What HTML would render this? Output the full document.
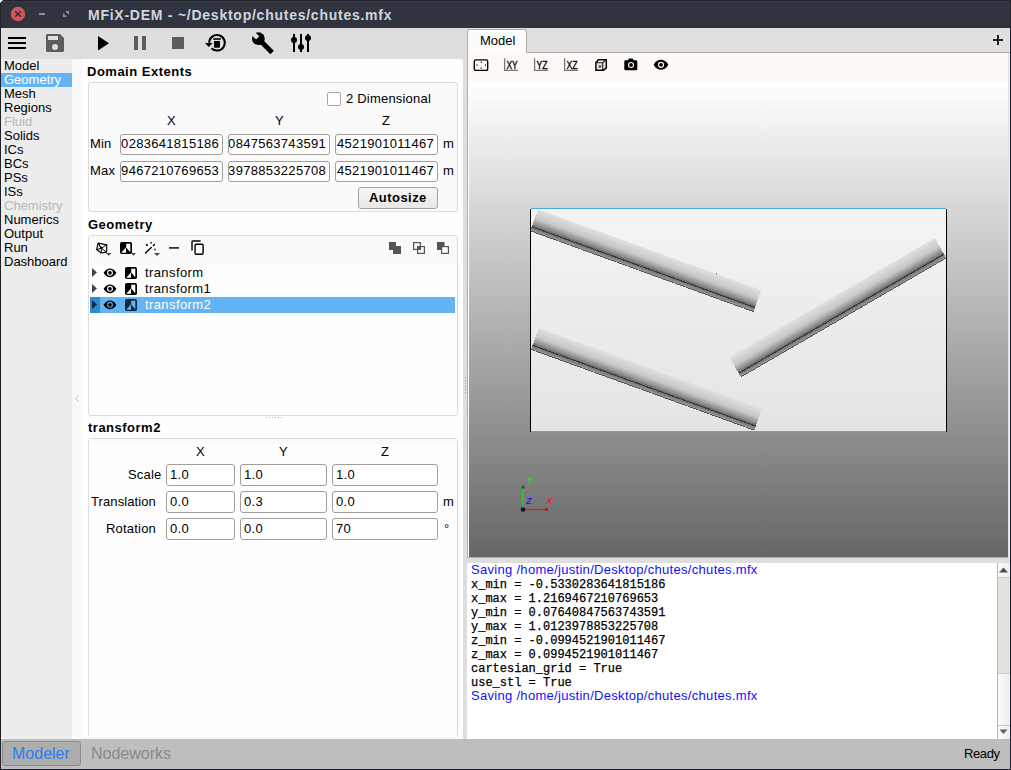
<!DOCTYPE html><html><head><meta charset="utf-8"><style>*{margin:0;padding:0;box-sizing:border-box}html,body{width:1011px;height:770px;overflow:hidden;background:#dedede;font-family:"Liberation Sans",sans-serif}.a{position:absolute}.t{position:absolute;white-space:nowrap;line-height:1}svg{overflow:visible}</style></head><body><div class="a" style="left:0px;top:0px;width:1011px;height:770px;background:#1f2229"></div>
<div class="a" style="left:1px;top:1px;width:1009px;height:27px;background:#2f343f;border-top-left-radius:2px;border-top-right-radius:2px"></div>
<div class="a" style="left:2px;top:1px;width:1007px;height:1px;background:#383d4a"></div>
<svg class="a" style="left:0;top:0" width="4" height="4"><path d="M0 0 H3 L0 3 Z" fill="#fff"/></svg>
<div class="a" style="left:1px;top:28px;width:1009px;height:741px;background:#dedede"></div>
<svg class="a" style="left:0;top:0" width="80" height="28"><circle cx="18" cy="14" r="7.2" fill="#d6555c"/><path d="M15.2 11.2 L20.8 16.8 M20.8 11.2 L15.2 16.8" stroke="#2f343f" stroke-width="1.6"/><rect x="39" y="13" width="6" height="2" fill="#8d919a"/><path d="M65 11 h4 v4 z M63 13 v4 h4 z" fill="#8d919a"/></svg>
<span class="t" style="left:88px;top:8px;font-size:14px;font-weight:bold;color:#cfd5de;font-family:'Liberation Sans',sans-serif;letter-spacing:0.75px;">MFiX-DEM - ~/Desktop/chutes/chutes.mfx</span>
<svg class="a" style="left:0;top:0" width="330" height="60"><rect x="8" y="37" width="18" height="2" fill="#000"/><rect x="8" y="42" width="18" height="2" fill="#000"/><rect x="8" y="47" width="18" height="2" fill="#000"/><path d="M47 34 h13 l4 4 v12.5 a1.5 1.5 0 0 1 -1.5 1.5 h-15 a1.5 1.5 0 0 1 -1.5 -1.5 v-15 a1.5 1.5 0 0 1 1.5 -1.5 z" fill="#5e5c5a"/><rect x="48" y="36" width="10" height="4" fill="#dedede"/><circle cx="55" cy="47" r="3" fill="#dedede"/><path d="M98 36 L109 43.2 L98 50.4 Z" fill="#000"/><rect x="134" y="36" width="4" height="14" fill="#5e5c5a"/><rect x="142" y="36" width="4" height="14" fill="#5e5c5a"/><rect x="172" y="37" width="12" height="12" fill="#5e5c5a"/><path d="M209.2 42.8 A7.8 7.8 0 1 1 211.5 48.3" stroke="#000" stroke-width="2" fill="none"/><path d="M205 43 L212.6 43 L208.8 46.9 Z" fill="#000"/><rect x="213.2" y="38.2" width="7.6" height="1.6" fill="#000"/><path d="M214 41 h6 v6 a0.8 0.8 0 0 1 -0.8 0.8 h-4.4 a0.8 0.8 0 0 1 -0.8 -0.8z" fill="#000"/><g transform="rotate(45 258.4 38.7)"><circle cx="258.4" cy="38.7" r="6.4" fill="#000"/><rect x="258.4" y="36.2" width="19.4" height="5" fill="#000"/><rect x="250" y="36.4" width="7.4" height="4.6" fill="#dedede"/></g><rect x="293" y="34" width="2" height="18" fill="#000"/><rect x="300" y="34" width="2" height="18" fill="#000"/><rect x="307" y="34" width="2" height="18" fill="#000"/><circle cx="294" cy="40" r="3" fill="#000"/><circle cx="301" cy="47" r="3" fill="#000"/><circle cx="308" cy="38" r="3" fill="#000"/></svg>
<div class="a" style="left:1px;top:59px;width:71px;height:680px;background:#ededed"></div>
<div class="a" style="left:1px;top:73px;width:71px;height:14px;background:#64b4f3"></div>
<span class="t" style="left:4px;top:59px;font-size:13px;font-weight:normal;color:#000;font-family:'Liberation Sans',sans-serif;letter-spacing:0px;">Model</span>
<span class="t" style="left:4px;top:73px;font-size:13px;font-weight:normal;color:#fff;font-family:'Liberation Sans',sans-serif;letter-spacing:0px;">Geometry</span>
<span class="t" style="left:4px;top:87px;font-size:13px;font-weight:normal;color:#000;font-family:'Liberation Sans',sans-serif;letter-spacing:0px;">Mesh</span>
<span class="t" style="left:4px;top:101px;font-size:13px;font-weight:normal;color:#000;font-family:'Liberation Sans',sans-serif;letter-spacing:0px;">Regions</span>
<span class="t" style="left:4px;top:115px;font-size:13px;font-weight:normal;color:#b9b9b9;font-family:'Liberation Sans',sans-serif;letter-spacing:0px;">Fluid</span>
<span class="t" style="left:4px;top:129px;font-size:13px;font-weight:normal;color:#000;font-family:'Liberation Sans',sans-serif;letter-spacing:0px;">Solids</span>
<span class="t" style="left:4px;top:143px;font-size:13px;font-weight:normal;color:#000;font-family:'Liberation Sans',sans-serif;letter-spacing:0px;">ICs</span>
<span class="t" style="left:4px;top:157px;font-size:13px;font-weight:normal;color:#000;font-family:'Liberation Sans',sans-serif;letter-spacing:0px;">BCs</span>
<span class="t" style="left:4px;top:171px;font-size:13px;font-weight:normal;color:#000;font-family:'Liberation Sans',sans-serif;letter-spacing:0px;">PSs</span>
<span class="t" style="left:4px;top:185px;font-size:13px;font-weight:normal;color:#000;font-family:'Liberation Sans',sans-serif;letter-spacing:0px;">ISs</span>
<span class="t" style="left:4px;top:199px;font-size:13px;font-weight:normal;color:#b9b9b9;font-family:'Liberation Sans',sans-serif;letter-spacing:0px;">Chemistry</span>
<span class="t" style="left:4px;top:213px;font-size:13px;font-weight:normal;color:#000;font-family:'Liberation Sans',sans-serif;letter-spacing:0px;">Numerics</span>
<span class="t" style="left:4px;top:227px;font-size:13px;font-weight:normal;color:#000;font-family:'Liberation Sans',sans-serif;letter-spacing:0px;">Output</span>
<span class="t" style="left:4px;top:241px;font-size:13px;font-weight:normal;color:#000;font-family:'Liberation Sans',sans-serif;letter-spacing:0px;">Run</span>
<span class="t" style="left:4px;top:255px;font-size:13px;font-weight:normal;color:#000;font-family:'Liberation Sans',sans-serif;letter-spacing:0px;">Dashboard</span>
<div class="a" style="left:72px;top:59px;width:10px;height:680px;background:#f9f9f9"></div>
<div class="a" style="left:82px;top:59px;width:381px;height:680px;background:#fefefe"></div>
<svg class="a" style="left:74px;top:394px" width="6" height="10"><path d="M4.5 1.5 L1.5 4.5 L4.5 7.5" stroke="#b8b8b8" stroke-width="1" fill="none"/></svg>
<span class="t" style="left:87px;top:65px;font-size:13px;font-weight:bold;color:#000;font-family:'Liberation Sans',sans-serif;letter-spacing:0.5px;">Domain Extents</span>
<div class="a" style="left:88px;top:82px;width:370px;height:130px;border:1px solid #dcdcdc;border-radius:3px;background:#fafafa"></div>
<div class="a" style="left:327px;top:92px;width:14px;height:14px;border:1px solid #a9a6a3;border-radius:2px;background:#fff"></div>
<span class="t" style="left:346px;top:92px;font-size:13px;font-weight:normal;color:#000;font-family:'Liberation Sans',sans-serif;letter-spacing:0.2px;">2 Dimensional</span>
<span class="t" style="left:167px;top:114px;font-size:13px;font-weight:normal;color:#000;font-family:'Liberation Sans',sans-serif;letter-spacing:0px;">X</span>
<span class="t" style="left:275px;top:114px;font-size:13px;font-weight:normal;color:#000;font-family:'Liberation Sans',sans-serif;letter-spacing:0px;">Y</span>
<span class="t" style="left:382px;top:114px;font-size:13px;font-weight:normal;color:#000;font-family:'Liberation Sans',sans-serif;letter-spacing:0px;">Z</span>
<span class="t" style="left:90px;top:137px;font-size:13px;font-weight:normal;color:#000;font-family:'Liberation Sans',sans-serif;letter-spacing:0.2px;">Min</span>
<span class="t" style="left:90px;top:164px;font-size:13px;font-weight:normal;color:#000;font-family:'Liberation Sans',sans-serif;letter-spacing:0.2px;">Max</span>
<span class="t" style="left:443px;top:137px;font-size:13px;font-weight:normal;color:#000;font-family:'Liberation Sans',sans-serif;letter-spacing:0px;">m</span>
<span class="t" style="left:443px;top:164px;font-size:13px;font-weight:normal;color:#000;font-family:'Liberation Sans',sans-serif;letter-spacing:0px;">m</span>
<div class="a" style="left:120px;top:134px;width:103px;height:21px;border:1px solid #a19e9b;border-radius:3px;background:#fff;overflow:hidden"><span style="position:absolute;top:2px;right:3px;font-size:13px;line-height:1;letter-spacing:0.3px;white-space:nowrap">0283641815186</span></div>
<div class="a" style="left:228px;top:134px;width:102px;height:21px;border:1px solid #a19e9b;border-radius:3px;background:#fff;overflow:hidden"><span style="position:absolute;top:2px;right:3px;font-size:13px;line-height:1;letter-spacing:0.3px;white-space:nowrap">0847563743591</span></div>
<div class="a" style="left:335px;top:134px;width:103px;height:21px;border:1px solid #a19e9b;border-radius:3px;background:#fff;overflow:hidden"><span style="position:absolute;top:2px;right:3px;font-size:13px;line-height:1;letter-spacing:0.3px;white-space:nowrap">4521901011467</span></div>
<div class="a" style="left:120px;top:161px;width:103px;height:21px;border:1px solid #a19e9b;border-radius:3px;background:#fff;overflow:hidden"><span style="position:absolute;top:2px;right:3px;font-size:13px;line-height:1;letter-spacing:0.3px;white-space:nowrap">9467210769653</span></div>
<div class="a" style="left:228px;top:161px;width:102px;height:21px;border:1px solid #a19e9b;border-radius:3px;background:#fff;overflow:hidden"><span style="position:absolute;top:2px;right:3px;font-size:13px;line-height:1;letter-spacing:0.3px;white-space:nowrap">3978853225708</span></div>
<div class="a" style="left:335px;top:161px;width:103px;height:21px;border:1px solid #a19e9b;border-radius:3px;background:#fff;overflow:hidden"><span style="position:absolute;top:2px;right:3px;font-size:13px;line-height:1;letter-spacing:0.3px;white-space:nowrap">4521901011467</span></div>
<div class="a" style="left:358px;top:187px;width:80px;height:22px;border:1px solid #a5a29f;border-radius:3px;background:linear-gradient(#f7f6f5,#e9e7e5)"></div>
<span class="t" style="left:369px;top:191px;font-size:13px;font-weight:bold;color:#000;font-family:'Liberation Sans',sans-serif;letter-spacing:0.45px;">Autosize</span>
<span class="t" style="left:88px;top:218px;font-size:13px;font-weight:bold;color:#000;font-family:'Liberation Sans',sans-serif;letter-spacing:0.5px;">Geometry</span>
<div class="a" style="left:88px;top:235px;width:370px;height:181px;border:1px solid #dcdcdc;border-radius:3px;background:#fefefe"></div>
<div class="a" style="left:89px;top:236px;width:368px;height:29px;background:#fafafa;border-radius:3px 3px 0 0"></div>
<div class="a" style="left:90px;top:297px;width:365px;height:16px;background:#64b4f3"></div>
<div class="a" style="left:90px;top:297px;width:10px;height:16px;background:#2f8ad0"></div>
<span class="t" style="left:145px;top:266px;font-size:13px;font-weight:normal;color:#000;font-family:'Liberation Sans',sans-serif;letter-spacing:0.4px;">transform</span>
<span class="t" style="left:145px;top:282px;font-size:13px;font-weight:normal;color:#000;font-family:'Liberation Sans',sans-serif;letter-spacing:0.4px;">transform1</span>
<span class="t" style="left:145px;top:298px;font-size:13px;font-weight:normal;color:#fff;font-family:'Liberation Sans',sans-serif;letter-spacing:0.4px;">transform2</span>
<svg class="a" style="left:0;top:0" width="470" height="320"><rect x="120" y="242" width="12" height="12" rx="1.8" fill="#000"/><path d="M126.2 243.8 H130.3 V252.2 L126.2 247.5 Z" fill="#fff"/><path d="M121.3 252.8 L125.9 247.6 L126.1 252.8 Z" fill="#fff"/><path d="M131 253 h5 l-2.5 2.8z" fill="#444"/><path d="M98.2 243.2 L106.8 244.8 L106.6 252.2 L101.2 253 L96.6 249.6 Z" fill="none" stroke="#000" stroke-width="1.2" stroke-linejoin="round"/><path d="M98.2 243.2 L101.4 248.2 L106.8 244.8 M101.4 248.2 L101.2 253 M101.4 248.2 L96.6 249.6 M101.4 248.2 L106.6 252.2 M98.2 243.2 L100.2 247" stroke="#000" stroke-width="1" fill="none"/><circle cx="101.3" cy="248" r="1.2" fill="#000"/><path d="M106 253 h5.5 l-2.75 2.8z" fill="#444"/><path d="M145.5 253 L151.3 247.6" stroke="#000" stroke-width="1.4" stroke-linecap="round"/><path d="M146.9 243.6 L148.2 244.9 L146.9 246.2 L145.6 244.9 Z" fill="#000"/><rect x="150.5" y="242" width="1.3" height="1.6" fill="#000"/><path d="M153 246 L154.8 244" stroke="#000" stroke-width="1.3"/><rect x="154.2" y="248.8" width="1.5" height="1.4" fill="#000"/><path d="M154 253 h6 l-3 3z" fill="#444"/><rect x="169" y="247" width="10" height="1.8" fill="#333"/><path d="M192 250.5 V241.8 a0.8 0.8 0 0 1 0.8 -0.8 H200.6" stroke="#000" stroke-width="1.4" fill="none"/><rect x="195.1" y="244.3" width="8" height="10" rx="1" stroke="#000" stroke-width="1.4" fill="none"/><path d="M389 242 h7 v4 h5 v8 h-8 v-4 h-4 z" fill="#555"/><rect x="413.6" y="242.6" width="6.8" height="6.8" fill="none" stroke="#555" stroke-width="1.2"/><rect x="417.6" y="246.6" width="6.8" height="6.8" fill="none" stroke="#555" stroke-width="1.2"/><rect x="417.6" y="246.6" width="2.8" height="2.8" fill="#555"/><path d="M437 242 h7.5 v4 h-3.5 v4 h-4 z" fill="#555"/><rect x="441.6" y="246.6" width="6.8" height="6.8" fill="#fff" stroke="#555" stroke-width="1.2"/><path d="M92 268 L97 272.5 L92 277 Z" fill="#444"/><path d="M103.6 272.8 C105.5 269.3 108 268.4 110 268.4 C112 268.4 114.5 269.3 116.4 272.8 C114.5 276.3 112 277.2 110 277.2 C108 277.2 105.5 276.3 103.6 272.8 Z" fill="#000"/><circle cx="110" cy="272.8" r="2.4" fill="none" stroke="#fff" stroke-width="1.1"/><rect x="125" y="267" width="12" height="12" rx="1.8" fill="#000"/><path d="M131.2 268.8 H135.3 V277.2 L131.2 272.5 Z" fill="#fff"/><path d="M126.3 277.8 L130.9 272.6 L131.1 277.8 Z" fill="#fff"/><path d="M92 284 L97 288.5 L92 293 Z" fill="#444"/><path d="M103.6 288.8 C105.5 285.3 108 284.4 110 284.4 C112 284.4 114.5 285.3 116.4 288.8 C114.5 292.3 112 293.2 110 293.2 C108 293.2 105.5 292.3 103.6 288.8 Z" fill="#000"/><circle cx="110" cy="288.8" r="2.4" fill="none" stroke="#fff" stroke-width="1.1"/><rect x="125" y="283" width="12" height="12" rx="1.8" fill="#000"/><path d="M131.2 284.8 H135.3 V293.2 L131.2 288.5 Z" fill="#fff"/><path d="M126.3 293.8 L130.9 288.6 L131.1 293.8 Z" fill="#fff"/><path d="M92 300 L97 304.5 L92 309 Z" fill="#0f2a40"/><path d="M103.6 304.8 C105.5 301.3 108 300.4 110 300.4 C112 300.4 114.5 301.3 116.4 304.8 C114.5 308.3 112 309.2 110 309.2 C108 309.2 105.5 308.3 103.6 304.8 Z" fill="#000"/><circle cx="110" cy="304.8" r="2.4" fill="none" stroke="#64b4f3" stroke-width="1.1"/><rect x="125" y="299" width="12" height="12" rx="1.8" fill="#0f2a40"/><path d="M131.2 300.8 H135.3 V309.2 L131.2 304.5 Z" fill="#64b4f3"/><path d="M126.3 309.8 L130.9 304.6 L131.1 309.8 Z" fill="#64b4f3"/></svg>
<span class="t" style="left:88px;top:421px;font-size:13px;font-weight:bold;color:#000;font-family:'Liberation Sans',sans-serif;letter-spacing:0.5px;">transform2</span>
<div class="a" style="left:88px;top:438px;width:370px;height:300px;border:1px solid #dcdcdc;border-radius:3px;background:#fefefe"></div>
<div class="a" style="left:89px;top:736px;width:368px;height:2px;background:#fefefe"></div>
<div class="a" style="left:88px;top:737px;width:370px;height:1px;background:#f3f3f3"></div>
<div class="a" style="left:89px;top:439px;width:368px;height:5px;background:#fafafa"></div>
<span class="t" style="left:196px;top:445px;font-size:13px;font-weight:normal;color:#000;font-family:'Liberation Sans',sans-serif;letter-spacing:0px;">X</span>
<span class="t" style="left:279px;top:445px;font-size:13px;font-weight:normal;color:#000;font-family:'Liberation Sans',sans-serif;letter-spacing:0px;">Y</span>
<span class="t" style="left:381px;top:445px;font-size:13px;font-weight:normal;color:#000;font-family:'Liberation Sans',sans-serif;letter-spacing:0px;">Z</span>
<span class="t" style="left:128px;top:468px;font-size:13px;font-weight:normal;color:#000;font-family:'Liberation Sans',sans-serif;letter-spacing:0.2px;">Scale</span>
<span class="t" style="left:91px;top:495px;font-size:13px;font-weight:normal;color:#000;font-family:'Liberation Sans',sans-serif;letter-spacing:0.1px;">Translation</span>
<span class="t" style="left:106px;top:522px;font-size:13px;font-weight:normal;color:#000;font-family:'Liberation Sans',sans-serif;letter-spacing:0.2px;">Rotation</span>
<span class="t" style="left:443px;top:495px;font-size:13px;font-weight:normal;color:#000;font-family:'Liberation Sans',sans-serif;letter-spacing:0px;">m</span>
<span class="t" style="left:444px;top:522px;font-size:13px;font-weight:normal;color:#000;font-family:'Liberation Sans',sans-serif;letter-spacing:0px;">&deg;</span>
<div class="a" style="left:166px;top:464px;width:69px;height:22px;border:1px solid #a19e9b;border-radius:3px;background:#fff;overflow:hidden"><span style="position:absolute;top:3px;left:3px;font-size:13px;line-height:1;letter-spacing:0.3px;white-space:nowrap">1.0</span></div>
<div class="a" style="left:240px;top:464px;width:87px;height:22px;border:1px solid #a19e9b;border-radius:3px;background:#fff;overflow:hidden"><span style="position:absolute;top:3px;left:3px;font-size:13px;line-height:1;letter-spacing:0.3px;white-space:nowrap">1.0</span></div>
<div class="a" style="left:332px;top:464px;width:106px;height:22px;border:1px solid #a19e9b;border-radius:3px;background:#fff;overflow:hidden"><span style="position:absolute;top:3px;left:3px;font-size:13px;line-height:1;letter-spacing:0.3px;white-space:nowrap">1.0</span></div>
<div class="a" style="left:166px;top:491px;width:69px;height:22px;border:1px solid #a19e9b;border-radius:3px;background:#fff;overflow:hidden"><span style="position:absolute;top:3px;left:3px;font-size:13px;line-height:1;letter-spacing:0.3px;white-space:nowrap">0.0</span></div>
<div class="a" style="left:240px;top:491px;width:87px;height:22px;border:1px solid #a19e9b;border-radius:3px;background:#fff;overflow:hidden"><span style="position:absolute;top:3px;left:3px;font-size:13px;line-height:1;letter-spacing:0.3px;white-space:nowrap">0.3</span></div>
<div class="a" style="left:332px;top:491px;width:106px;height:22px;border:1px solid #a19e9b;border-radius:3px;background:#fff;overflow:hidden"><span style="position:absolute;top:3px;left:3px;font-size:13px;line-height:1;letter-spacing:0.3px;white-space:nowrap">0.0</span></div>
<div class="a" style="left:166px;top:518px;width:69px;height:22px;border:1px solid #a19e9b;border-radius:3px;background:#fff;overflow:hidden"><span style="position:absolute;top:3px;left:3px;font-size:13px;line-height:1;letter-spacing:0.3px;white-space:nowrap">0.0</span></div>
<div class="a" style="left:240px;top:518px;width:87px;height:22px;border:1px solid #a19e9b;border-radius:3px;background:#fff;overflow:hidden"><span style="position:absolute;top:3px;left:3px;font-size:13px;line-height:1;letter-spacing:0.3px;white-space:nowrap">0.0</span></div>
<div class="a" style="left:332px;top:518px;width:106px;height:22px;border:1px solid #a19e9b;border-radius:3px;background:#fff;overflow:hidden"><span style="position:absolute;top:3px;left:3px;font-size:13px;line-height:1;letter-spacing:0.3px;white-space:nowrap">70</span></div>
<svg class="a" style="left:266px;top:416px" width="20" height="4"><rect x="0" y="1" width="1" height="1" fill="#b0b0b0"/><rect x="3" y="1" width="1" height="1" fill="#b0b0b0"/><rect x="6" y="1" width="1" height="1" fill="#b0b0b0"/><rect x="9" y="1" width="1" height="1" fill="#b0b0b0"/><rect x="12" y="1" width="1" height="1" fill="#b0b0b0"/><rect x="15" y="1" width="1" height="1" fill="#b0b0b0"/></svg>
<div class="a" style="left:467px;top:28px;width:543px;height:24px;background:#dfdfdf"></div>
<div class="a" style="left:467px;top:52px;width:543px;height:1px;background:#b0adaa"></div>
<div class="a" style="left:467px;top:29px;width:60px;height:24px;background:#fdfcfb;border:1px solid #b0adaa;border-bottom:none;border-radius:3px 3px 0 0"></div>
<span class="t" style="left:480px;top:34px;font-size:13px;font-weight:normal;color:#000;font-family:'Liberation Sans',sans-serif;letter-spacing:0px;">Model</span>
<svg class="a" style="left:990px;top:33px" width="16" height="14"><rect x="3" y="6" width="10" height="2" fill="#222"/><rect x="7" y="2" width="2" height="10" fill="#222"/></svg>
<div class="a" style="left:467px;top:53px;width:543px;height:505px;background:#fcf9f6;border-left:1px solid #b0adaa;border-bottom:1px solid #b0adaa"></div>
<div class="a" style="left:1008px;top:53px;width:2px;height:505px;background:#e8e6e4"></div>
<svg class="a" style="left:0;top:0" width="700" height="80"><rect x="474.3" y="59.8" width="13.4" height="10.6" rx="1.5" fill="none" stroke="#000" stroke-width="1.35"/><rect x="480.6" y="61.6" width="1.4" height="1" fill="#000"/><rect x="480.6" y="67.6" width="1.4" height="1" fill="#000"/><rect x="476.5" y="64.4" width="1" height="1.4" fill="#000"/><rect x="485" y="64.4" width="1" height="1.4" fill="#000"/><path d="M504.6 58.2 V70.4 H518" fill="none" stroke="#777" stroke-width="1.3"/><text x="506.5" y="68.6" font-family="Liberation Sans" font-size="11.5" textLength="11.2" lengthAdjust="spacingAndGlyphs" fill="#000" stroke="#000" stroke-width="0.35">XY</text><path d="M534.6 58.2 V70.4 H548" fill="none" stroke="#777" stroke-width="1.3"/><text x="536.5" y="68.6" font-family="Liberation Sans" font-size="11.5" textLength="11.2" lengthAdjust="spacingAndGlyphs" fill="#000" stroke="#000" stroke-width="0.35">YZ</text><path d="M564.6 58.2 V70.4 H578" fill="none" stroke="#777" stroke-width="1.3"/><text x="566.5" y="68.6" font-family="Liberation Sans" font-size="11.5" textLength="11.2" lengthAdjust="spacingAndGlyphs" fill="#000" stroke="#000" stroke-width="0.35">XZ</text><path d="M595.9 62.5 L598.4 59.8 H606.3 V67.8 L603.6 70.3 H595.9 Z" fill="none" stroke="#000" stroke-width="1.5" stroke-linejoin="miter"/><path d="M596.5 62.7 H602.8 V70 M602.8 62.7 L606 59.8" fill="none" stroke="#000" stroke-width="1.1"/><path d="M598.6 65.2 H601.2 V67.8 H598.6 Z" fill="#555"/><path d="M597 69.5 L599.2 67.3 M599 65.5 L597.5 63.5 M601 65.5 L605 61.5" stroke="#777" stroke-width="0.7"/><path d="M624.3 61.5 a1.2 1.2 0 0 1 1.2 -1.2 h2.3 l1.2 -1.8 h3.6 l1.2 1.8 h2.3 a1.2 1.2 0 0 1 1.2 1.2 v7.6 a1.2 1.2 0 0 1 -1.2 1.2 h-10.6 a1.2 1.2 0 0 1 -1.2 -1.2 z" fill="#000"/><circle cx="631" cy="65" r="2.5" fill="none" stroke="#fff" stroke-width="1.1"/><path d="M653.6 64.8 C655.8 61 658.6 59.8 661 59.8 C663.4 59.8 666.2 61 668.4 64.8 C666.2 68.6 663.4 69.8 661 69.8 C658.6 69.8 655.8 68.6 653.6 64.8 Z" fill="#000"/><circle cx="661" cy="64.8" r="2.5" fill="none" stroke="#fff" stroke-width="1.2"/></svg>
<div class="a" style="left:469px;top:83px;width:539px;height:474px;background:linear-gradient(#ffffff,#666666)"></div>
<svg class="a" style="left:469px;top:83px;overflow:hidden" width="539" height="474"><defs><linearGradient id="boxg" x1="0" y1="0" x2="0" y2="1"><stop offset="0" stop-color="#f4f4f4"/><stop offset="1" stop-color="#e4e4e4"/></linearGradient><linearGradient id="rod" x1="0" y1="0" x2="0" y2="1"><stop offset="0" stop-color="#e0e0e0"/><stop offset="0.5" stop-color="#c8c8c8"/><stop offset="0.85" stop-color="#888888"/><stop offset="1" stop-color="#5c5c5c"/></linearGradient><linearGradient id="lip" x1="0" y1="0" x2="0" y2="1"><stop offset="0" stop-color="#707070"/><stop offset="1" stop-color="#a4a4a4"/></linearGradient></defs><g transform="translate(-469,-83)"><rect x="530" y="208" width="417" height="224" fill="url(#boxg)"/><rect x="531" y="208" width="415" height="1" fill="#4aa6ee"/><rect x="531" y="431" width="415" height="1" fill="#4aa6ee"/><rect x="530" y="209" width="1" height="223" fill="#000"/><rect x="946" y="209" width="1" height="223" fill="#000"/><g transform="translate(538.0,209.4) rotate(19.9)" shape-rendering="crispEdges"><rect x="0" y="0" width="237.4" height="18.6" fill="url(#rod)"/><rect x="0" y="18.6" width="237.4" height="4.6" fill="url(#lip)"/><rect x="0" y="17.900000000000002" width="237.4" height="1.1" fill="#3a3a3a"/><rect x="0" y="22.300000000000004" width="237.4" height="0.9" fill="#555"/></g><g transform="translate(538.8,328.0) rotate(19.9)" shape-rendering="crispEdges"><rect x="0" y="0" width="237.4" height="18.6" fill="url(#rod)"/><rect x="0" y="18.6" width="237.4" height="4.6" fill="url(#lip)"/><rect x="0" y="17.900000000000002" width="237.4" height="1.1" fill="#3a3a3a"/><rect x="0" y="22.300000000000004" width="237.4" height="0.9" fill="#555"/></g><g transform="translate(729.4,357.3) rotate(-30.1)" shape-rendering="crispEdges"><rect x="0" y="0" width="237.4" height="18.6" fill="url(#rod)"/><rect x="0" y="18.6" width="237.4" height="4.6" fill="url(#lip)"/><rect x="0" y="17.900000000000002" width="237.4" height="1.1" fill="#3a3a3a"/><rect x="0" y="22.300000000000004" width="237.4" height="0.9" fill="#555"/></g><rect x="716" y="273" width="1" height="1" fill="#666"/><path d="M523 509.5 H548" stroke="#ee1111" stroke-width="1.2"/><path d="M523 509.5 V485" stroke="#00ee00" stroke-width="1.2"/><rect x="545" y="508" width="3" height="3" fill="#c01818"/><path d="M521.2 488.5 L523 484.2 L524.8 488.5 Z" fill="#225522"/><circle cx="523" cy="509.5" r="2.2" fill="#0a0a40"/><text x="527" y="483" font-family="Liberation Sans" font-size="9" font-weight="bold" font-style="italic" fill="#00f000">Y</text><text x="526" y="504" font-family="Liberation Sans" font-size="9" font-weight="bold" font-style="italic" fill="#2222ee">Z</text><text x="546.5" y="504" font-family="Liberation Sans" font-size="9" font-weight="bold" font-style="italic" fill="#ee2222">X</text></g></svg>
<svg class="a" style="left:464px;top:376px" width="3" height="20"><rect x="1" y="1" width="1" height="1" fill="#9a9a9a"/><rect x="1" y="4" width="1" height="1" fill="#9a9a9a"/><rect x="1" y="7" width="1" height="1" fill="#9a9a9a"/><rect x="1" y="10" width="1" height="1" fill="#9a9a9a"/><rect x="1" y="13" width="1" height="1" fill="#9a9a9a"/><rect x="1" y="16" width="1" height="1" fill="#9a9a9a"/></svg>
<div class="a" style="left:468px;top:83px;width:1px;height:474px;background:#fdfdfd"></div>
<div class="a" style="left:467px;top:558px;width:543px;height:5px;background:#dedede"></div>
<div class="a" style="left:467px;top:563px;width:530px;height:176px;background:#fff"></div>
<span class="t" style="left:471px;top:563px;font-size:13px;font-weight:normal;color:#1010ff;font-family:'Liberation Sans',sans-serif;letter-spacing:0.3px;">Saving /home/justin/Desktop/chutes/chutes.mfx</span>
<span class="t" style="left:471px;top:579px;font-size:12px;font-weight:normal;color:#000;font-family:'Liberation Mono',monospace;letter-spacing:0px;-webkit-text-stroke:0.25px #000">x_min = -0.5330283641815186</span>
<span class="t" style="left:471px;top:593px;font-size:12px;font-weight:normal;color:#000;font-family:'Liberation Mono',monospace;letter-spacing:0px;-webkit-text-stroke:0.25px #000">x_max = 1.2169467210769653</span>
<span class="t" style="left:471px;top:607px;font-size:12px;font-weight:normal;color:#000;font-family:'Liberation Mono',monospace;letter-spacing:0px;-webkit-text-stroke:0.25px #000">y_min = 0.07640847563743591</span>
<span class="t" style="left:471px;top:621px;font-size:12px;font-weight:normal;color:#000;font-family:'Liberation Mono',monospace;letter-spacing:0px;-webkit-text-stroke:0.25px #000">y_max = 1.0123978853225708</span>
<span class="t" style="left:471px;top:635px;font-size:12px;font-weight:normal;color:#000;font-family:'Liberation Mono',monospace;letter-spacing:0px;-webkit-text-stroke:0.25px #000">z_min = -0.0994521901011467</span>
<span class="t" style="left:471px;top:649px;font-size:12px;font-weight:normal;color:#000;font-family:'Liberation Mono',monospace;letter-spacing:0px;-webkit-text-stroke:0.25px #000">z_max = 0.0994521901011467</span>
<span class="t" style="left:471px;top:663px;font-size:12px;font-weight:normal;color:#000;font-family:'Liberation Mono',monospace;letter-spacing:0px;-webkit-text-stroke:0.25px #000">cartesian_grid = True</span>
<span class="t" style="left:471px;top:677px;font-size:12px;font-weight:normal;color:#000;font-family:'Liberation Mono',monospace;letter-spacing:0px;-webkit-text-stroke:0.25px #000">use_stl = True</span>
<span class="t" style="left:471px;top:689px;font-size:13px;font-weight:normal;color:#1010ff;font-family:'Liberation Sans',sans-serif;letter-spacing:0.3px;">Saving /home/justin/Desktop/chutes/chutes.mfx</span>
<div class="a" style="left:997px;top:563px;width:13px;height:176px;background:#e4e2df;border-left:1px solid #b9b6b3"></div>
<div class="a" style="left:998px;top:563px;width:12px;height:14px;background:linear-gradient(90deg,#fbfaf9,#f1efed)"></div>
<div class="a" style="left:998px;top:577px;width:12px;height:1px;background:#c9c6c3"></div>
<div class="a" style="left:998px;top:673px;width:12px;height:53px;background:linear-gradient(90deg,#fbfaf9,#efedeb)"></div>
<div class="a" style="left:998px;top:673px;width:12px;height:1px;background:#c9c6c3"></div>
<div class="a" style="left:998px;top:725px;width:12px;height:1px;background:#c9c6c3"></div>
<div class="a" style="left:998px;top:726px;width:12px;height:13px;background:linear-gradient(90deg,#fbfaf9,#f1efed)"></div>
<svg class="a" style="left:997px;top:563px" width="13" height="176"><path d="M2 9.5 L6.5 4.5 L11 9.5 Z" fill="#505050"/><path d="M2.5 166.5 L6.5 171 L10.5 166.5 Z" fill="#606060"/></svg>
<div class="a" style="left:1px;top:739px;width:1009px;height:30px;background:#bebebe"></div>
<div class="a" style="left:2px;top:741px;width:79px;height:25px;background:#adadad;border:1px solid #8c8c8c;border-radius:3px"></div>
<span class="t" style="left:12px;top:746px;font-size:16px;font-weight:normal;color:#2a7ff0;font-family:'Liberation Sans',sans-serif;letter-spacing:0px;">Modeler</span>
<span class="t" style="left:91px;top:746px;font-size:16px;font-weight:normal;color:#8a8a8a;font-family:'Liberation Sans',sans-serif;letter-spacing:0px;">Nodeworks</span>
<span class="t" style="left:964px;top:747px;font-size:13px;font-weight:normal;color:#000;font-family:'Liberation Sans',sans-serif;letter-spacing:-0.4px;">Ready</span></body></html>
